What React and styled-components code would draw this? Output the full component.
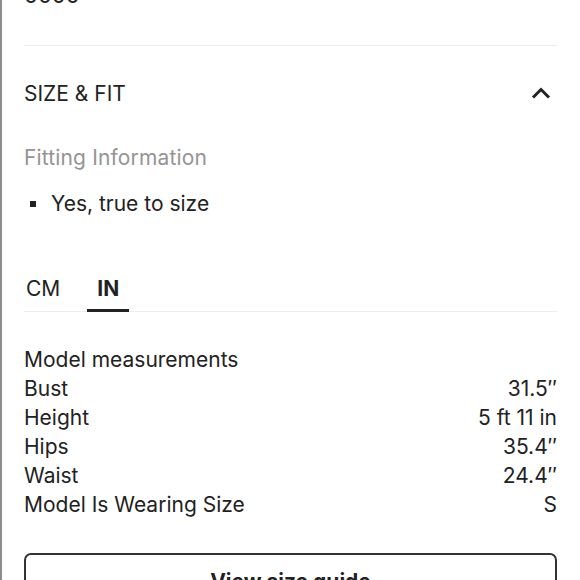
import React from "react";
import styled, { createGlobalStyle } from "styled-components";

const Global = createGlobalStyle`
  html, body { margin: 0; padding: 0; background: #fff; }
  body { font-family: Inter, "Noto Sans", "Liberation Sans", sans-serif; color: #222; overflow: hidden; }
  * { box-sizing: border-box; }
`;

const Page = styled.div`
  width: 580px;
  height: 580px;
  overflow: hidden;
  border-left: 2px solid #8c8c8c;
  padding: 0 23px 0 22px;
`;

const Price = styled.div`
  margin-top: -19px;
  font-size: 22px;
  line-height: 29px;
  height: 29px;
`;

const Divider = styled.hr`
  border: 0;
  border-top: 1px solid #ececec;
  margin: 35px 0 0;
`;

const Header = styled.div`
  display: flex;
  align-items: center;
  justify-content: space-between;
  height: 94px;
  font-size: 21px;
`;

const Chevron = styled.svg`
  width: 22px;
  height: 14px;
  margin-right: 5px;
`;

const Label = styled.div`
  margin-top: 3px;
  font-size: 21px;
  letter-spacing: 0.15px;
  line-height: 29px;
  color: #949494;
`;

const List = styled.ul`
  list-style: none;
  margin: 17px 0 0;
  padding: 0;
`;

const Item = styled.li`
  display: flex;
  align-items: center;
  gap: 15px;
  font-size: 21px;
  line-height: 29px;
  padding-left: 6px;
  &::before {
    content: "";
    width: 6px;
    height: 6px;
    background: #222;
  }
`;

const Tabs = styled.div`
  display: flex;
  gap: 25px;
  margin-top: 56px;
  border-bottom: 1px solid #ececec;
`;

const Tab = styled.div`
  padding: 0 ${(p) => (p.$first ? 2 : 10)}px 6px;
  font-size: 21px;
  line-height: 29px;
  font-weight: ${(p) => (p.$active ? 700 : 400)};
  border-bottom: 3px solid ${(p) => (p.$active ? "#222" : "transparent")};
  margin-bottom: -1px;
`;

const Measurements = styled.div`
  margin-top: 33px;
  font-size: 21px;
  line-height: 29px;
`;

const Row = styled.div`
  display: flex;
  justify-content: space-between;
`;

const Button = styled.button`
  display: block;
  width: 100%;
  height: 52px;
  margin-top: 34px;
  border: 2px solid #333;
  border-radius: 7px;
  background: #fff;
  font-family: inherit;
  font-size: 21px;
  font-weight: 700;
  color: #222;
  padding-top: 6px;
`;

const rows = [
  ["Bust", "31.5″"],
  ["Height", "5 ft 11 in"],
  ["Hips", "35.4″"],
  ["Waist", "24.4″"],
  ["Model Is Wearing Size", "S"],
];

export default function App() {
  return (
    <>
      <Global />
      <Page>
        <Price>0000</Price>
        <Divider />
        <Header>
          <span>SIZE &amp; FIT</span>
          <Chevron viewBox="0 0 22 14" fill="none">
            <path d="M3 11.5 L11 3.5 L19 11.5" stroke="#222" strokeWidth="3" />
          </Chevron>
        </Header>
        <Label>Fitting Information</Label>
        <List>
          <Item>Yes, true to size</Item>
        </List>
        <Tabs>
          <Tab $first>CM</Tab>
          <Tab $active>IN</Tab>
        </Tabs>
        <Measurements>
          <div>Model measurements</div>
          {rows.map(([k, v]) => (
            <Row key={k}>
              <span>{k}</span>
              <span>{v}</span>
            </Row>
          ))}
        </Measurements>
        <Button>View size guide</Button>
      </Page>
    </>
  );
}
